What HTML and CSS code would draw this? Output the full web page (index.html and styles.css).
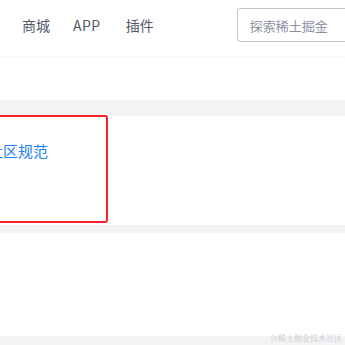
FILE: index.html
```html
<!DOCTYPE html>
<html lang="zh-CN">
<head>
    <meta charset="UTF-8">
    <meta name="viewport" content="width=device-width, initial-scale=1.0">
    <title>稀土掘金</title>
    <link rel="stylesheet" href="styles.css">
</head>
<body>
    <header class="top-bar">
        <nav class="nav-list">
            <a class="nav-item" href="#">商城</a>
            <a class="nav-item" href="#">APP</a>
            <a class="nav-item" href="#">插件</a>
        </nav>
        <div class="search-box">
            <input class="search-input" type="text" placeholder="探索稀土掘金">
        </div>
    </header>
    <div class="sub-bar"></div>
    <main class="page">
        <section class="card card-links">
            <a class="rule-link" href="#">社区规范</a>
            <div class="mark-box"></div>
        </section>
        <section class="card card-empty"></section>
    </main>
    <div class="watermark">@稀土掘金技术社区</div>
</body>
</html>
```

FILE: styles.css
```css
body {
    margin: 0;
    font-family: "Noto Sans CJK SC", "Noto Sans", sans-serif;
    background-color: #f2f3f5;
    overflow: hidden;
    height: 345px;
    position: relative;
}
.top-bar {
    height: 56px;
    display: flex;
    align-items: center;
    background-color: #fff;
    box-shadow: 0 1px 2px rgba(0, 0, 0, 0.04);
    position: relative;
    z-index: 1;
    overflow: hidden;
}
.nav-list {
    display: flex;
    flex-shrink: 0;
    padding-left: 22px;
    margin-top: -6px;
}
.nav-item {
    font-size: 14px;
    color: #515767;
    text-decoration: none;
    white-space: nowrap;
    margin-right: 23px;
    line-height: 22px;
}
.nav-item:nth-child(2) {
    margin-right: 25px;
    letter-spacing: 0.5px;
}
.nav-item:last-child {
    margin-right: 0;
}
.search-box {
    margin-left: 83px;
    width: 120px;
    height: 34px;
    flex-shrink: 0;
    border: 1px solid #c2c8d1;
    border-right: none;
    border-radius: 4px 0 0 4px;
    box-sizing: border-box;
    display: flex;
    align-items: center;
    margin-top: -6px;
}
.search-input {
    border: none;
    outline: none;
    background: transparent;
    padding: 0 0 0 12px;
    font-family: inherit;
    font-size: 13px;
    width: 100%;
}
.search-input::placeholder {
    color: #8a919f;
}
.sub-bar {
    height: 44px;
    background-color: #fff;
}
.page {
    padding-top: 16px;
}
.card {
    background-color: #fff;
}
.card-links {
    height: 109px;
    position: relative;
}
.rule-link {
    display: block;
    margin-left: -12px;
    padding-top: 24px;
    font-size: 15px;
    line-height: 22px;
    color: #1e80ff;
    text-decoration: none;
}
.mark-box {
    position: absolute;
    top: -1px;
    left: -10px;
    width: 118px;
    height: 108px;
    box-sizing: border-box;
    border: 2px solid #f5222d;
    border-radius: 3px;
}
.card-empty {
    margin-top: 8px;
    height: 103px;
}
.watermark {
    position: absolute;
    right: 3px;
    bottom: 2px;
    font-family: "Noto Serif CJK SC", "Noto Sans CJK SC", serif;
    font-size: 8px;
    color: #c8c9cc;
}
```
